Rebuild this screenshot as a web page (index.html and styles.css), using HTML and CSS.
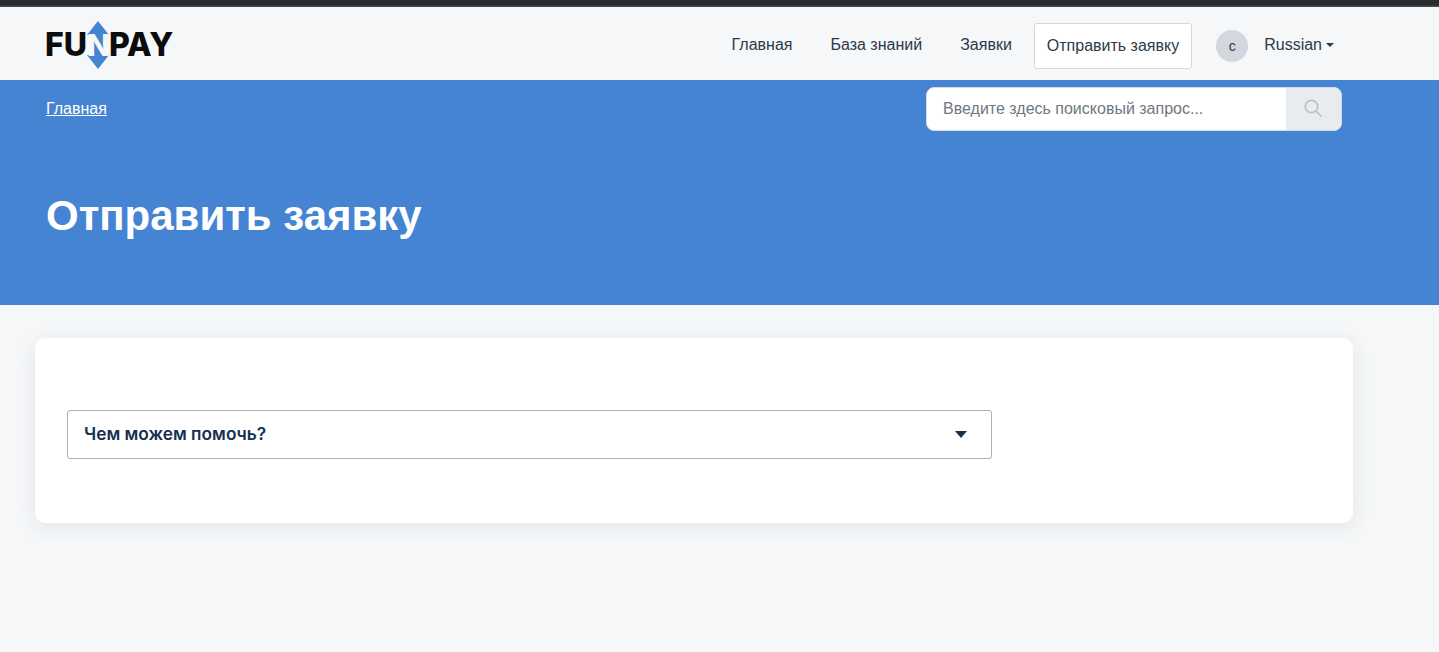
FILE: index.html
```html
<!DOCTYPE html>
<html lang="ru">
<head>
<meta charset="utf-8">
<title>Отправить заявку</title>
<link rel="stylesheet" href="styles.css">
</head>
<body>
<div class="topline"></div>
<header class="header">
  <a class="logo" href="#">
    <span class="logo-text">FU</span>
    <span class="logo-mark">
      <svg width="22" height="48" viewBox="0 0 22 48" aria-hidden="true">
        <path d="M11 0 22 14 17.500 14 17.500 34 22 34 11 48 0 34 4.500 34 4.500 14 0 14Z" fill="#4484d3"/>
      </svg>
      <span class="logo-n">N</span>
    </span>
    <span class="logo-text">PAY</span>
  </a>
  <nav class="nav">
    <a class="nav-link" href="#">Главная</a>
    <a class="nav-link" href="#">База знаний</a>
    <a class="nav-link" href="#">Заявки</a>
    <a class="nav-button" href="#">Отправить заявку</a>
    <span class="avatar">c</span>
    <a class="lang" href="#">Russian<span class="lang-caret"></span></a>
  </nav>
</header>
<section class="hero">
  <div class="hero-top">
    <a class="crumb" href="#">Главная</a>
    <form class="search">
      <input class="search-input" type="text" placeholder="Введите здесь поисковый запрос...">
      <span class="search-btn">
        <svg width="18" height="18" viewBox="0 0 18 18" fill="none" stroke="#b9c0c8" stroke-width="1.700" aria-hidden="true">
          <circle cx="7.500" cy="7.500" r="6.200"/>
          <path d="M12 12l5 5" stroke-linecap="round"/>
        </svg>
      </span>
    </form>
  </div>
  <h1 class="title">Отправить заявку</h1>
</section>
<main class="main">
  <div class="card">
    <div class="select">
      <span class="select-label">Чем можем помочь?</span>
      <span class="select-caret"></span>
    </div>
  </div>
</main>
</body>
</html>
```
FILE: styles.css
```css
* { box-sizing: border-box; }
html, body { height: 100%; }
body {
  margin: 0;
  background: #f5f7f9;
  font-family: "Liberation Sans", Arial, sans-serif;
  color: #2b3a4a;
  overflow: hidden;
}
a { text-decoration: none; color: inherit; }
.topline { height: 7px; background: linear-gradient(#2a2d30 0 5px, #55585b); }
.header {
  height: 73px;
  padding: 5px 105px 0 45px;
  display: flex;
  align-items: center;
  justify-content: space-between;
  background: #f5f7f9;
}
.logo { display: flex; align-items: center; color: #0c0c0c; margin-top: -3px; }
.logo-text {
  font-family: Inter, "Liberation Sans", sans-serif;
  font-weight: 800;
  font-size: 32px;
  line-height: 48px;
}
.logo-mark { position: relative; width: 22px; height: 48px; display: block; }
.logo-mark svg { display: block; }
.logo-n {
  position: absolute;
  inset: 0;
  text-align: center;
  font-family: Inter, "Liberation Sans", sans-serif;
  font-weight: 800;
  font-size: 30px;
  line-height: 48px;
  color: #f5f7f9;
}
.nav { display: flex; align-items: center; font-size: 16px; color: #2b3a4a; }
.nav-link { margin: 0 38px 2px 0; }
.nav-link:nth-child(3) { margin-right: 22px; }
.nav-button {
  height: 46px;
  padding: 0 12px;
  display: flex;
  align-items: center;
  background: #fff;
  border: 1px solid #d5d9de;
  border-radius: 3px;
  margin-right: 24px;
}
.avatar {
  width: 32px;
  height: 32px;
  border-radius: 50%;
  background: #d2d8de;
  display: flex;
  align-items: center;
  justify-content: center;
  font-size: 14px;
  margin-right: 16px;
}
.lang { display: flex; align-items: center; margin-bottom: 2px; }
.lang-caret {
  margin-left: 4px;
  border-top: 4px solid #2b3a4a;
  border-left: 4px solid transparent;
  border-right: 4px solid transparent;
}
.hero { height: 225px; background: #4484d3; padding: 7px 97px 0 46px; }
.hero-top { display: flex; justify-content: space-between; align-items: flex-start; }
.crumb { color: #fff; font-size: 16px; text-decoration: underline; margin-top: 13px; }
.search {
  width: 416px;
  height: 44px;
  display: flex;
  border: 1px solid #d5dce5;
  border-radius: 8px;
  overflow: hidden;
  background: #fff;
}
.search-input {
  flex: 1;
  min-width: 0;
  border: 0;
  outline: 0;
  background: transparent;
  padding: 0 16px;
  font: 16px "Liberation Sans", Arial, sans-serif;
}
.search-input::placeholder { color: #6f7780; opacity: 1; }
.search-btn {
  width: 55px;
  background: #e9ecef;
  display: flex;
  align-items: center;
  justify-content: center;
  padding: 0 2px 3px 0;
}
.title {
  margin: 58px 0 0;
  color: #fff;
  font-size: 42px;
  line-height: 54px;
  font-weight: 700;
}
.main { padding: 33px 86px 0 35px; }
.card {
  height: 185px;
  background: #fff;
  border-radius: 10px;
  box-shadow: 0 4px 20px rgba(40, 50, 60, 0.09);
  padding: 72px 32px 0;
}
.select {
  width: 925px;
  height: 49px;
  padding: 0 24px 0 16px;
  border: 1px solid #a9b0b8;
  border-radius: 3px;
  display: flex;
  align-items: center;
  justify-content: space-between;
}
.select-label {
  font-family: Inter, "Liberation Sans", sans-serif;
  font-weight: 600;
  font-size: 17.300px;
  color: #16304f;
  margin-top: -2px;
}
.select-caret {
  border-top: 7px solid #16304f;
  border-left: 6.500px solid transparent;
  border-right: 6.500px solid transparent;
}
```
